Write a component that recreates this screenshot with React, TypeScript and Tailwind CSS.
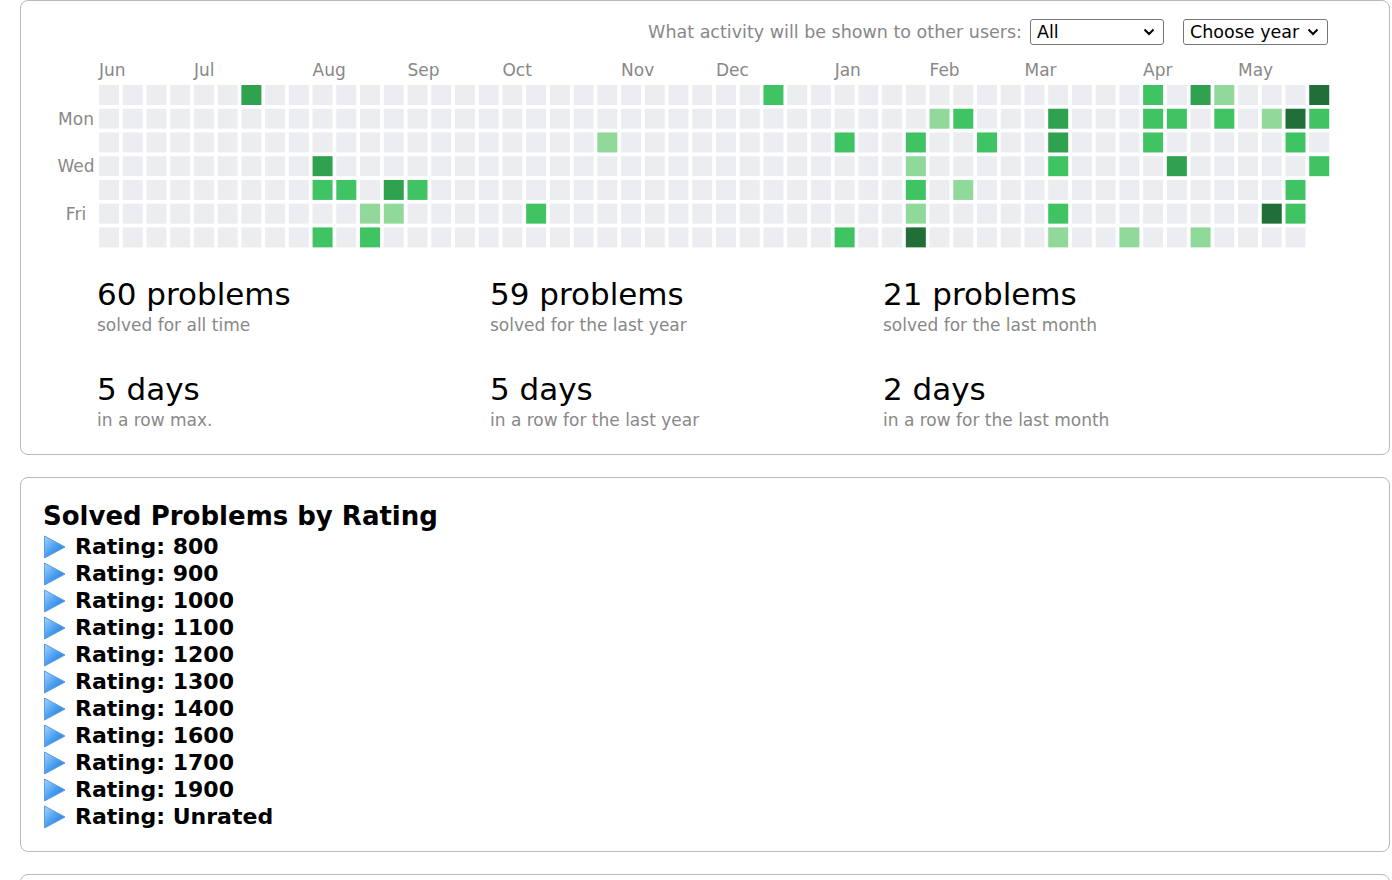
import React from 'react';

const FONT = { fontFamily: '"DejaVu Sans", Verdana, sans-serif' };

const PITCH = 23.73;
const CELL = 20;
const X0 = 78;
const Y0 = 33;

const LEVEL_COLORS = ['#ebedf0', '#90d99a', '#40c463', '#30a14e', '#216e39'];

// col,row -> level
const ACTIVITY: Record<string, number> = {
  '6,0': 3,
  '9,3': 3, '9,4': 2, '10,4': 2, '12,4': 3, '13,4': 2,
  '11,5': 1, '12,5': 1, '9,6': 2, '11,6': 2,
  '18,5': 2, '21,2': 1, '28,0': 2, '31,2': 2, '31,6': 2,
  '44,0': 2, '46,0': 3, '47,0': 1, '51,0': 4,
  '35,1': 1, '36,1': 2, '40,1': 3, '44,1': 2, '45,1': 2, '47,1': 2, '49,1': 1, '50,1': 4, '51,1': 2,
  '34,2': 2, '37,2': 2, '40,2': 3, '44,2': 2, '50,2': 2,
  '34,3': 1, '40,3': 2, '45,3': 3, '51,3': 2,
  '34,4': 2, '36,4': 1, '50,4': 2,
  '34,5': 1, '40,5': 2, '49,5': 4, '50,5': 2,
  '34,6': 4, '40,6': 1, '43,6': 1, '46,6': 1,
};

const MONTHS: [string, number][] = [
  ['Jun', 0], ['Jul', 4], ['Aug', 9], ['Sep', 13], ['Oct', 17], ['Nov', 22],
  ['Dec', 26], ['Jan', 31], ['Feb', 35], ['Mar', 39], ['Apr', 44], ['May', 48],
];

const DAYS: [string, number][] = [['Mon', 1], ['Wed', 3], ['Fri', 5]];

const Heatmap: React.FC = () => {
  const cells: React.ReactNode[] = [];
  for (let c = 0; c < 52; c++) {
    const rows = c === 51 ? 4 : 7;
    for (let r = 0; r < rows; r++) {
      const level = ACTIVITY[`${c},${r}`] || 0;
      cells.push(
        <rect
          key={`${c}-${r}`}
          x={X0 + c * PITCH}
          y={Y0 + r * PITCH}
          width={CELL}
          height={CELL}
          fill={LEVEL_COLORS[level]}
        />
      );
    }
  }
  return (
    <svg width="1320" height="200" className="block" style={FONT}>
      {MONTHS.map(([m, c]) => (
        <text key={m} x={X0 + c * PITCH} y={24} fontSize="17" fill="#888888">
          {m}
        </text>
      ))}
      {DAYS.map(([d, r]) => (
        <text key={d} x={55} y={Y0 + r * PITCH + 16} fontSize="17" fill="#888888" textAnchor="middle">
          {d}
        </text>
      ))}
      {cells}
    </svg>
  );
};

const Chevron: React.FC = () => (
  <svg width="12" height="8" viewBox="0 0 12 8" className="shrink-0">
    <path d="M1.5 1.5 L6 6 L10.5 1.5" fill="none" stroke="#000" strokeWidth="2" />
  </svg>
);

const SelectBox: React.FC<{ label: string; width: string }> = ({ label, width }) => (
  <div
    className={`${width} h-[26px] border border-[#767676] rounded-[3px] flex items-center justify-between pl-[6px] pr-[8px] text-[17.5px] text-black`}
  >
    <span>{label}</span>
    <Chevron />
  </div>
);

const Stat: React.FC<{ value: string; label: string }> = ({ value, label }) => (
  <div>
    <div className="text-[31px] leading-[36px] text-black">{value}</div>
    <div className="text-[17px] leading-[20px] mt-[3px] text-[#888888]">{label}</div>
  </div>
);

const Triangle: React.FC = () => (
  <svg width="24" height="26" viewBox="0 0 24 26" className="shrink-0">
    <defs>
      <linearGradient id="tri" x1="0" y1="0" x2="1" y2="1">
        <stop offset="0%" stopColor="#a6d4ff" />
        <stop offset="50%" stopColor="#4a9ef0" />
        <stop offset="100%" stopColor="#1f6fd0" />
      </linearGradient>
    </defs>
    <polygon points="1.5,2 22,13 1.5,24" fill="url(#tri)" stroke="#5a9ede" strokeWidth="1" strokeLinejoin="round" />
  </svg>
);

const RATINGS = ['800', '900', '1000', '1100', '1200', '1300', '1400', '1600', '1700', '1900', 'Unrated'];

export default function App() {
  return (
    <div className="bg-white min-h-screen pl-[20px] pr-[2px]" style={FONT}>
      {/* Activity card */}
      <div className="border border-[#b9b9b9] rounded-[8px] pb-[24px]">
        <div className="flex items-center justify-end pt-[18px] pr-[61px]">
          <span className="text-[17.5px] text-[#888888] mr-[8px]">What activity will be shown to other users:</span>
          <SelectBox label="All" width="w-[134px]" />
          <div className="w-[19px]" />
          <SelectBox label="Choose year" width="w-[145px]" />
        </div>
        <div className="mt-[7px]">
          <Heatmap />
        </div>
        <div className="grid grid-cols-[393px_393px_393px] pl-[76px] mt-[24px]">
          <Stat value="60 problems" label="solved for all time" />
          <Stat value="59 problems" label="solved for the last year" />
          <Stat value="21 problems" label="solved for the last month" />
        </div>
        <div className="grid grid-cols-[393px_393px_393px] pl-[76px] mt-[36px]">
          <Stat value="5 days" label="in a row max." />
          <Stat value="5 days" label="in a row for the last year" />
          <Stat value="2 days" label="in a row for the last month" />
        </div>
      </div>

      {/* Ratings card */}
      <div className="border border-[#b9b9b9] rounded-[8px] mt-[22px] pl-[22px] pt-[24px] pb-[21px]">
        <h2 className="text-[26px] leading-[29px] font-bold text-black">Solved Problems by Rating</h2>
        <ul className="mt-[2px]">
          {RATINGS.map(r => (
            <li key={r} className="flex items-center h-[27px]">
              <Triangle />
              <span className="ml-[8px] text-[22px] font-bold text-black">Rating: {r}</span>
            </li>
          ))}
        </ul>
      </div>

      {/* Next card (cut off) */}
      <div className="border border-[#b9b9b9] rounded-[8px] mt-[22px] h-[100px]" />
    </div>
  );
}
